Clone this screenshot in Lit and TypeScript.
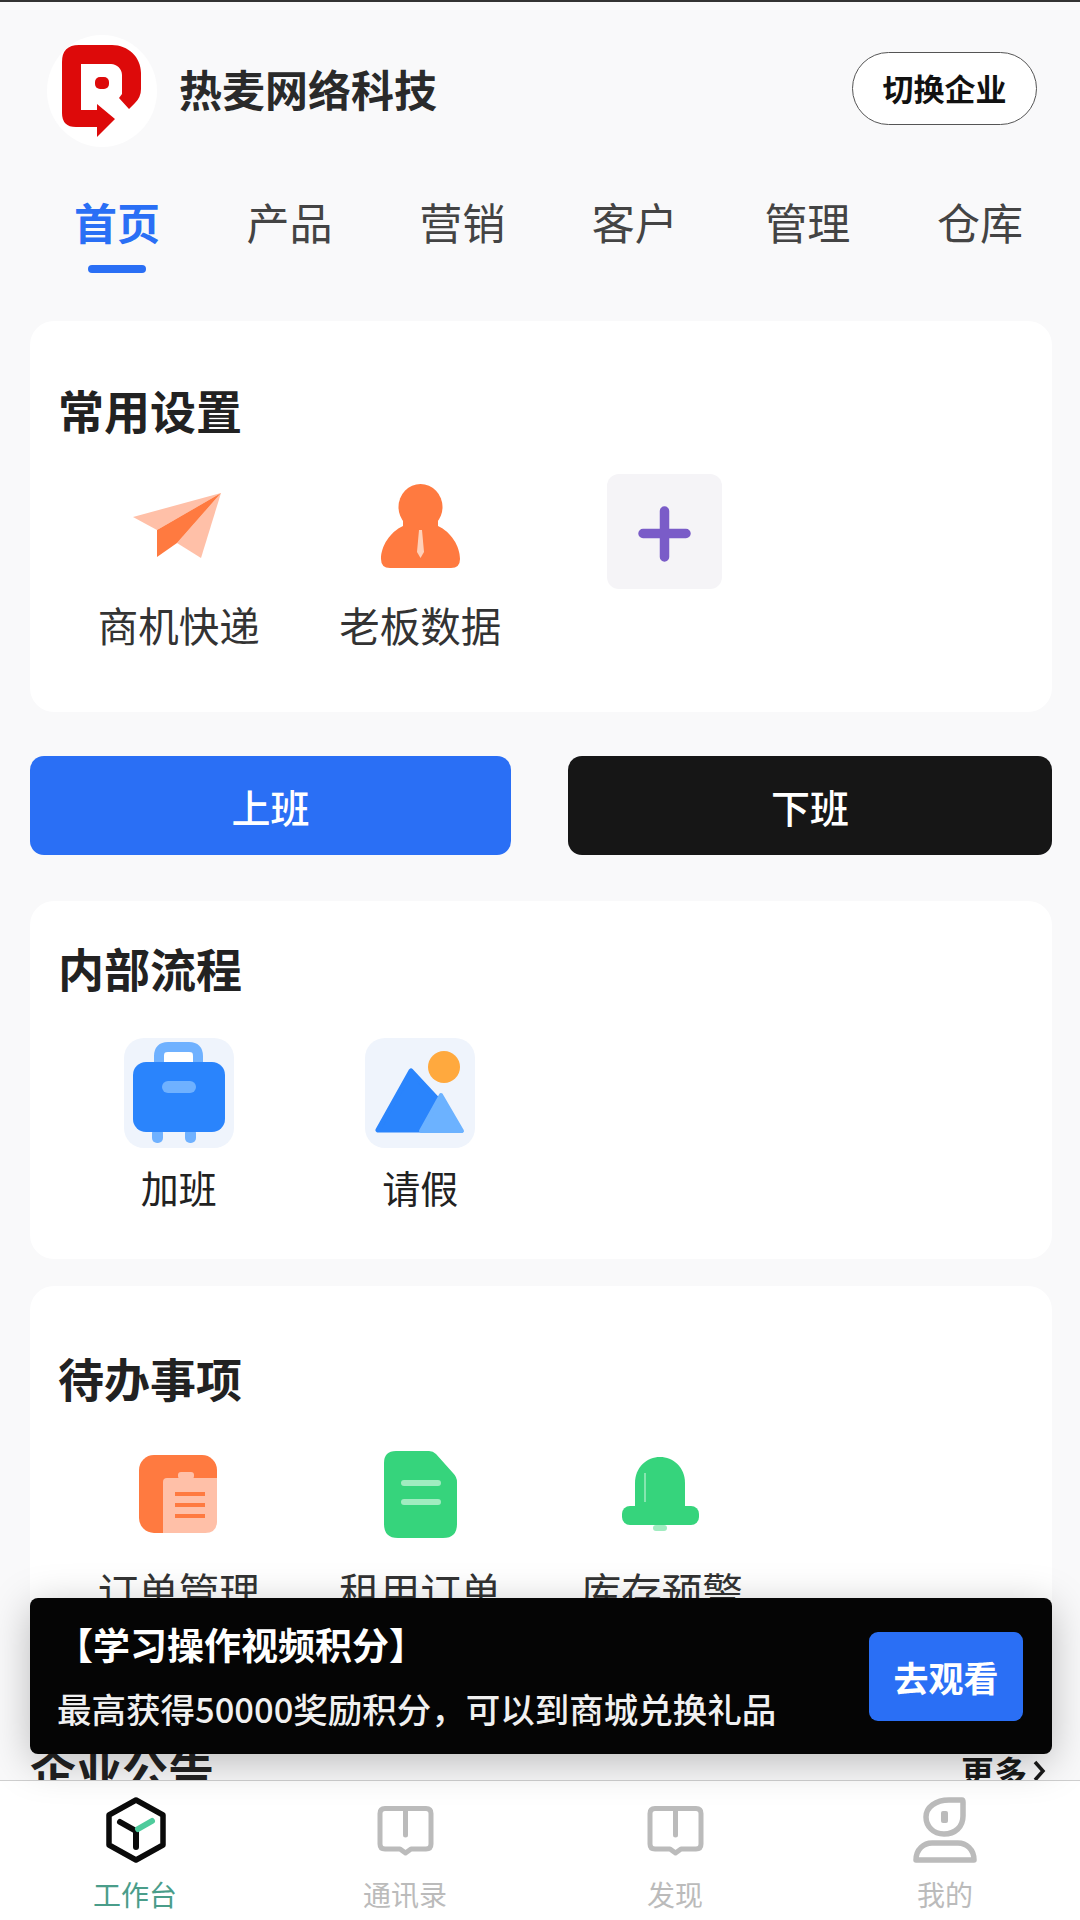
import { LitElement, html, css, svg } from "lit";
import { customElement } from "lit/decorators.js";

const logo = html`<svg class="logo-mark" viewBox="0 0 79 92"><path fill="#dd0a0a" d="M17 0H50C66 0 79 12 79 28V44Q79 52 73 58L67 64L57 53L60 49V30C60 24 55 19 49 19H19V65H35V59L53 74L35 92V82H14Q0 82 0 68V17Q0 0 17 0Z"/><rect fill="#dd0a0a" x="33" y="32" width="14" height="12" rx="5"/></svg>`;

const plane = svg`<polygon fill="#ffc0a8" points="100,19 12,43 36,56"/><polygon fill="#ffc0a8" points="100,19 56,69 80,84"/><polygon fill="#ff7a40" points="100,19 36,56 36,83 56,69"/>`;
const person = svg`<ellipse cx="57.5" cy="33" rx="22" ry="23" fill="#ff7a40"/><path fill="#ff7a40" d="M40 44H75V52C88 58 97 72 97 85Q97 94 88 94H27Q18 94 18 85C18 72 27 58 40 52Z"/><path fill="#ffd0b8" d="M56 56H59L61 78L57.5 84L54 78Z"/>`;
const plus = svg`<path d="M57.5 37V83M36 59.5H79" stroke="#7a5cc8" stroke-width="9.5" stroke-linecap="round" fill="none"/>`;

const suitcase = svg`<rect x="40" y="14" width="29" height="12" fill="#fff"/><path d="M35 28V18Q35 9 44 9H65Q74 9 74 18V28" fill="none" stroke="#6fb1ff" stroke-width="10"/><rect x="28" y="90" width="11" height="15" rx="5" fill="#6fb1ff"/><rect x="61" y="90" width="11" height="15" rx="5" fill="#6fb1ff"/><rect x="9" y="24" width="92" height="70" rx="13" fill="#2a84fc"/><rect x="38" y="43" width="34" height="12" rx="6" fill="#6fb1ff"/>`;
const mountains = svg`<circle cx="79" cy="29" r="16" fill="#ffa93e"/><path d="M46 33L13 92H60L73 62Z" fill="#2a84fc" stroke="#2a84fc" stroke-width="5" stroke-linejoin="round"/><path d="M76 57L97 93H56Z" fill="#6cb2ff" stroke="#6cb2ff" stroke-width="4" stroke-linejoin="round"/>`;

const clipboard = svg`<rect x="18" y="15" width="78" height="78" rx="15" fill="#ff7a40"/><path d="M46 38H96V81Q96 93 84 93H42V42Q42 38 46 38Z" fill="#ffc0a8"/><rect x="57" y="32" width="16" height="7" rx="3" fill="#ffc0a8"/><path d="M54 54H84M54 65H84M54 76H84" stroke="#ff7a40" stroke-width="4" fill="none"/>`;
const docIcon = svg`<path d="M33 11H66Q70 11 73 14L90 33Q94 37 94 42V84Q94 98 80 98H35Q21 98 21 84V23Q21 11 33 11Z" fill="#36d47c"/><path d="M41 43H75M41 62H75" stroke="#a0ecc0" stroke-width="6" fill="none" stroke-linecap="round"/>`;
const bell = svg`<path d="M31 82V43C31 27 43 17 56 17C69 17 81 27 81 43V82Z" fill="#36d47c"/><rect x="18" y="66" width="77" height="19" rx="8" fill="#36d47c"/><rect x="49" y="85" width="14" height="6" rx="3" fill="#a0ecc0"/><path d="M41 33V62" stroke="#a0ecc0" stroke-width="1.5" fill="none"/>`;

const book = html`<svg class="nav-icon" viewBox="0 0 66 66"><path d="M13 11.5H54Q59 11.5 59 16.5V47Q59 52 54 52H39L33.5 56L28 52H13Q8 52 8 47V16.5Q8 11.5 13 11.5Z" fill="none" stroke="#bbbbbb" stroke-width="5" stroke-linejoin="round"/><path d="M33.5 12V38" stroke="#bbbbbb" stroke-width="5" stroke-linecap="round"/></svg>`;
const work = html`<svg class="nav-icon" viewBox="-1 0 66 66"><path d="M33 3L60 18V48L33 63L6 48V18Z" fill="none" stroke="#0a0a0a" stroke-width="5.5" stroke-linejoin="round"/><path d="M17 25L33 34V50" fill="none" stroke="#0a0a0a" stroke-width="6" stroke-linecap="round" stroke-linejoin="round"/><path d="M35 32L49 24" fill="none" stroke="#4ecb9c" stroke-width="6" stroke-linecap="round"/></svg>`;
const me = html`<svg class="nav-icon" viewBox="0 0 66 66"><path d="M37 3H50Q51 3 51 5V19C51 30 43 37 32 37C21 37 14 29 14 20C14 10 24 3 37 3Z" fill="none" stroke="#bbbbbb" stroke-width="5.5" stroke-linejoin="round"/><rect x="29" y="14" width="7" height="12" rx="2" fill="#bbbbbb"/><path d="M4 63C4 52 12 46 20 46H46C54 46 62 52 62 63Z" fill="none" stroke="#bbbbbb" stroke-width="5.5" stroke-linejoin="round"/></svg>`;

@customElement("app-root")
export class AppRoot extends LitElement {
  static styles = css`
    :host {
      display: block;
      position: relative;
      width: 1080px;
      height: 1920px;
      overflow: hidden;
      background: #f9f9fa;
      border-top: 2px solid #333;
      box-sizing: border-box;
      font-family: "Noto Sans CJK SC", "Noto Sans", sans-serif;
      color: #222;
    }
    .header {
      display: flex;
      align-items: center;
      padding: 33px 43px 0 47px;
    }
    .avatar {
      width: 110px;
      height: 112px;
      border-radius: 50%;
      background: #fff;
      display: flex;
      align-items: center;
      justify-content: center;
      flex: none;
    }
    .logo-mark {
      width: 79px;
      height: 92px;
      margin-left: -2px;
    }
    .company {
      font-size: 43px;
      font-weight: 700;
      line-height: 60px;
      color: #2a2a2a;
      margin: 0 0 6px 22px;
      flex: 1;
    }
    .switch {
      width: 185px;
      height: 73px;
      box-sizing: border-box;
      border: 1.5px solid #555;
      border-radius: 37px;
      background: #fff;
      font-size: 31px;
      font-weight: 700;
      color: #111;
      display: flex;
      align-items: center;
      justify-content: center;
      margin-bottom: 5px;
      padding-bottom: 2px;
    }
    .tabs {
      display: flex;
      justify-content: space-between;
      padding: 44px 57px 0 74px;
      height: 82px;
    }
    .tab {
      display: flex;
      flex-direction: column;
      align-items: center;
      font-size: 43px;
      line-height: 60px;
      color: #444;
    }
    .tab.on {
      color: #2a6ff5;
      font-weight: 700;
    }
    .bar {
      width: 58px;
      height: 8px;
      border-radius: 4px;
      background: #2a6ff5;
      margin-top: 14px;
    }
    .content {
      padding: 48px 28px 0 30px;
    }
    .card {
      background: #fff;
      border-radius: 24px;
      padding: 0 28px;
    }
    .c1 { padding-top: 58px; padding-bottom: 59px; }
    .c2 { padding-top: 36px; padding-bottom: 44px; margin-top: 46px; }
    .c3 { padding-top: 61px; padding-bottom: 55px; margin-top: 27px; }
    .card h2 {
      margin: 0;
      font-size: 46px;
      font-weight: 700;
      line-height: 60px;
      color: #222;
    }
    .c1 h2 { margin-bottom: 35px; }
    .c2 h2 { margin-bottom: 41px; }
    .c3 h2 { margin-bottom: 33px; }
    .grid {
      display: grid;
      grid-template-columns: repeat(4, 241.5px);
    }
    .item {
      display: flex;
      flex-direction: column;
      align-items: center;
    }
    .box {
      width: 115px;
      height: 115px;
      display: block;
    }
    .c2 .box {
      width: 110px;
      height: 110px;
      background: #eff4fc;
      border-radius: 20px;
    }
    .box.add {
      background: #f5f4f7;
      border-radius: 12px;
      margin-left: 6px;
    }
    .label {
      font-size: 40.5px;
      line-height: 56px;
      margin-top: 8px;
      color: #333;
    }
    .c2 .label {
      font-size: 38px;
      margin-top: 11px;
      color: #222;
    }
    .actions {
      display: grid;
      grid-template-columns: 481px 484px;
      justify-content: space-between;
      margin-top: 44px;
    }
    .act {
      height: 99px;
      border-radius: 14px;
      background: #2a6ff5;
      color: #fff;
      font-size: 39px;
      font-weight: 500;
      display: flex;
      align-items: center;
      justify-content: center;
    }
    .act.dark { background: #161616; }
    .notice {
      display: flex;
      justify-content: space-between;
      align-items: center;
      margin-top: 62px;
      line-height: 60px;
    }
    .notice b {
      font-size: 46px;
      font-weight: 700;
      color: #222;
    }
    .more {
      display: flex;
      align-items: center;
      gap: 5px;
      padding-top: 5px;
      font-size: 33px;
      font-weight: 700;
      color: #1a1a1a;
      margin-right: 6px;
    }
    .more svg {
      width: 14px;
      height: 24px;
      display: block;
    }
    .banner {
      position: absolute;
      left: 30px;
      top: 1596px;
      width: 1022px;
      height: 156px;
      box-sizing: border-box;
      background: #050505;
      border-radius: 8px;
      box-shadow: 0 8px 40px rgba(0, 0, 0, 0.25);
      display: flex;
      align-items: center;
      justify-content: space-between;
      padding: 0 29px 0 26px;
      color: #fff;
      z-index: 3;
    }
    .b-title {
      font-size: 37px;
      font-weight: 700;
      line-height: 50px;
      margin-bottom: 14px;
    }
    .b-sub {
      font-size: 34.5px;
      font-weight: 500;
      line-height: 50px;
      color: #f0f0f0;
      margin-left: 1px;
    }
    .watch {
      width: 154px;
      height: 89px;
      border-radius: 9px;
      background: #2a6ff5;
      font-size: 35px;
      font-weight: 700;
      display: flex;
      align-items: center;
      justify-content: center;
    }
    .nav {
      position: absolute;
      left: 0;
      right: 0;
      top: 1778px;
      bottom: 0;
      background: #fff;
      border-top: 1.5px solid #cfcfcf;
      display: grid;
      grid-template-columns: repeat(4, 1fr);
      z-index: 2;
    }
    .nav-item {
      display: flex;
      flex-direction: column;
      align-items: center;
      padding-top: 16px;
      font-size: 28px;
      line-height: 40px;
      color: #bbb;
    }
    .nav-item.on { color: #4a9d8a; }
    .nav-icon {
      width: 66px;
      height: 66px;
      display: block;
      margin-bottom: 11px;
    }
  `;

  private tile(icon: unknown, label: string) {
    return html`<div class="item">
      <svg class="box" viewBox="0 0 115 115">${icon}</svg>
      <div class="label">${label}</div>
    </div>`;
  }

  private tile2(icon: unknown, label: string) {
    return html`<div class="item">
      <svg class="box" viewBox="0 0 110 110">${icon}</svg>
      <div class="label">${label}</div>
    </div>`;
  }

  render() {
    const tabs = ["首页", "产品", "营销", "客户", "管理", "仓库"];
    return html`
      <div class="header">
        <div class="avatar">${logo}</div>
        <div class="company">热麦网络科技</div>
        <div class="switch">切换企业</div>
      </div>
      <div class="tabs">
        ${tabs.map(
          (t, i) => html`<div class="tab ${i === 0 ? "on" : ""}">
            ${t}${i === 0 ? html`<div class="bar"></div>` : ""}
          </div>`
        )}
      </div>
      <div class="content">
        <section class="card c1">
          <h2>常用设置</h2>
          <div class="grid">
            ${this.tile(plane, "商机快递")}
            ${this.tile(person, "老板数据")}
            <div class="item"><svg class="box add" viewBox="0 0 115 115">${plus}</svg></div>
          </div>
        </section>
        <div class="actions">
          <div class="act">上班</div>
          <div class="act dark">下班</div>
        </div>
        <section class="card c2">
          <h2>内部流程</h2>
          <div class="grid">
            ${this.tile2(suitcase, "加班")}
            ${this.tile2(mountains, "请假")}
          </div>
        </section>
        <section class="card c3">
          <h2>待办事项</h2>
          <div class="grid">
            ${this.tile(clipboard, "订单管理")}
            ${this.tile(docIcon, "租用订单")}
            ${this.tile(bell, "库存预警")}
          </div>
        </section>
        <div class="notice">
          <b>企业公告</b>
          <span class="more">更多<svg viewBox="0 0 14 24"><path d="M3 3L11 12L3 21" fill="none" stroke="#1a1a1a" stroke-width="3.5"/></svg></span>
        </div>
      </div>
      <div class="banner">
        <div>
          <div class="b-title">【学习操作视频积分】</div>
          <div class="b-sub">最高获得50000奖励积分，可以到商城兑换礼品</div>
        </div>
        <div class="watch">去观看</div>
      </div>
      <nav class="nav">
        <div class="nav-item on">${work}<span>工作台</span></div>
        <div class="nav-item">${book}<span>通讯录</span></div>
        <div class="nav-item">${book}<span>发现</span></div>
        <div class="nav-item">${me}<span>我的</span></div>
      </nav>
    `;
  }
}
